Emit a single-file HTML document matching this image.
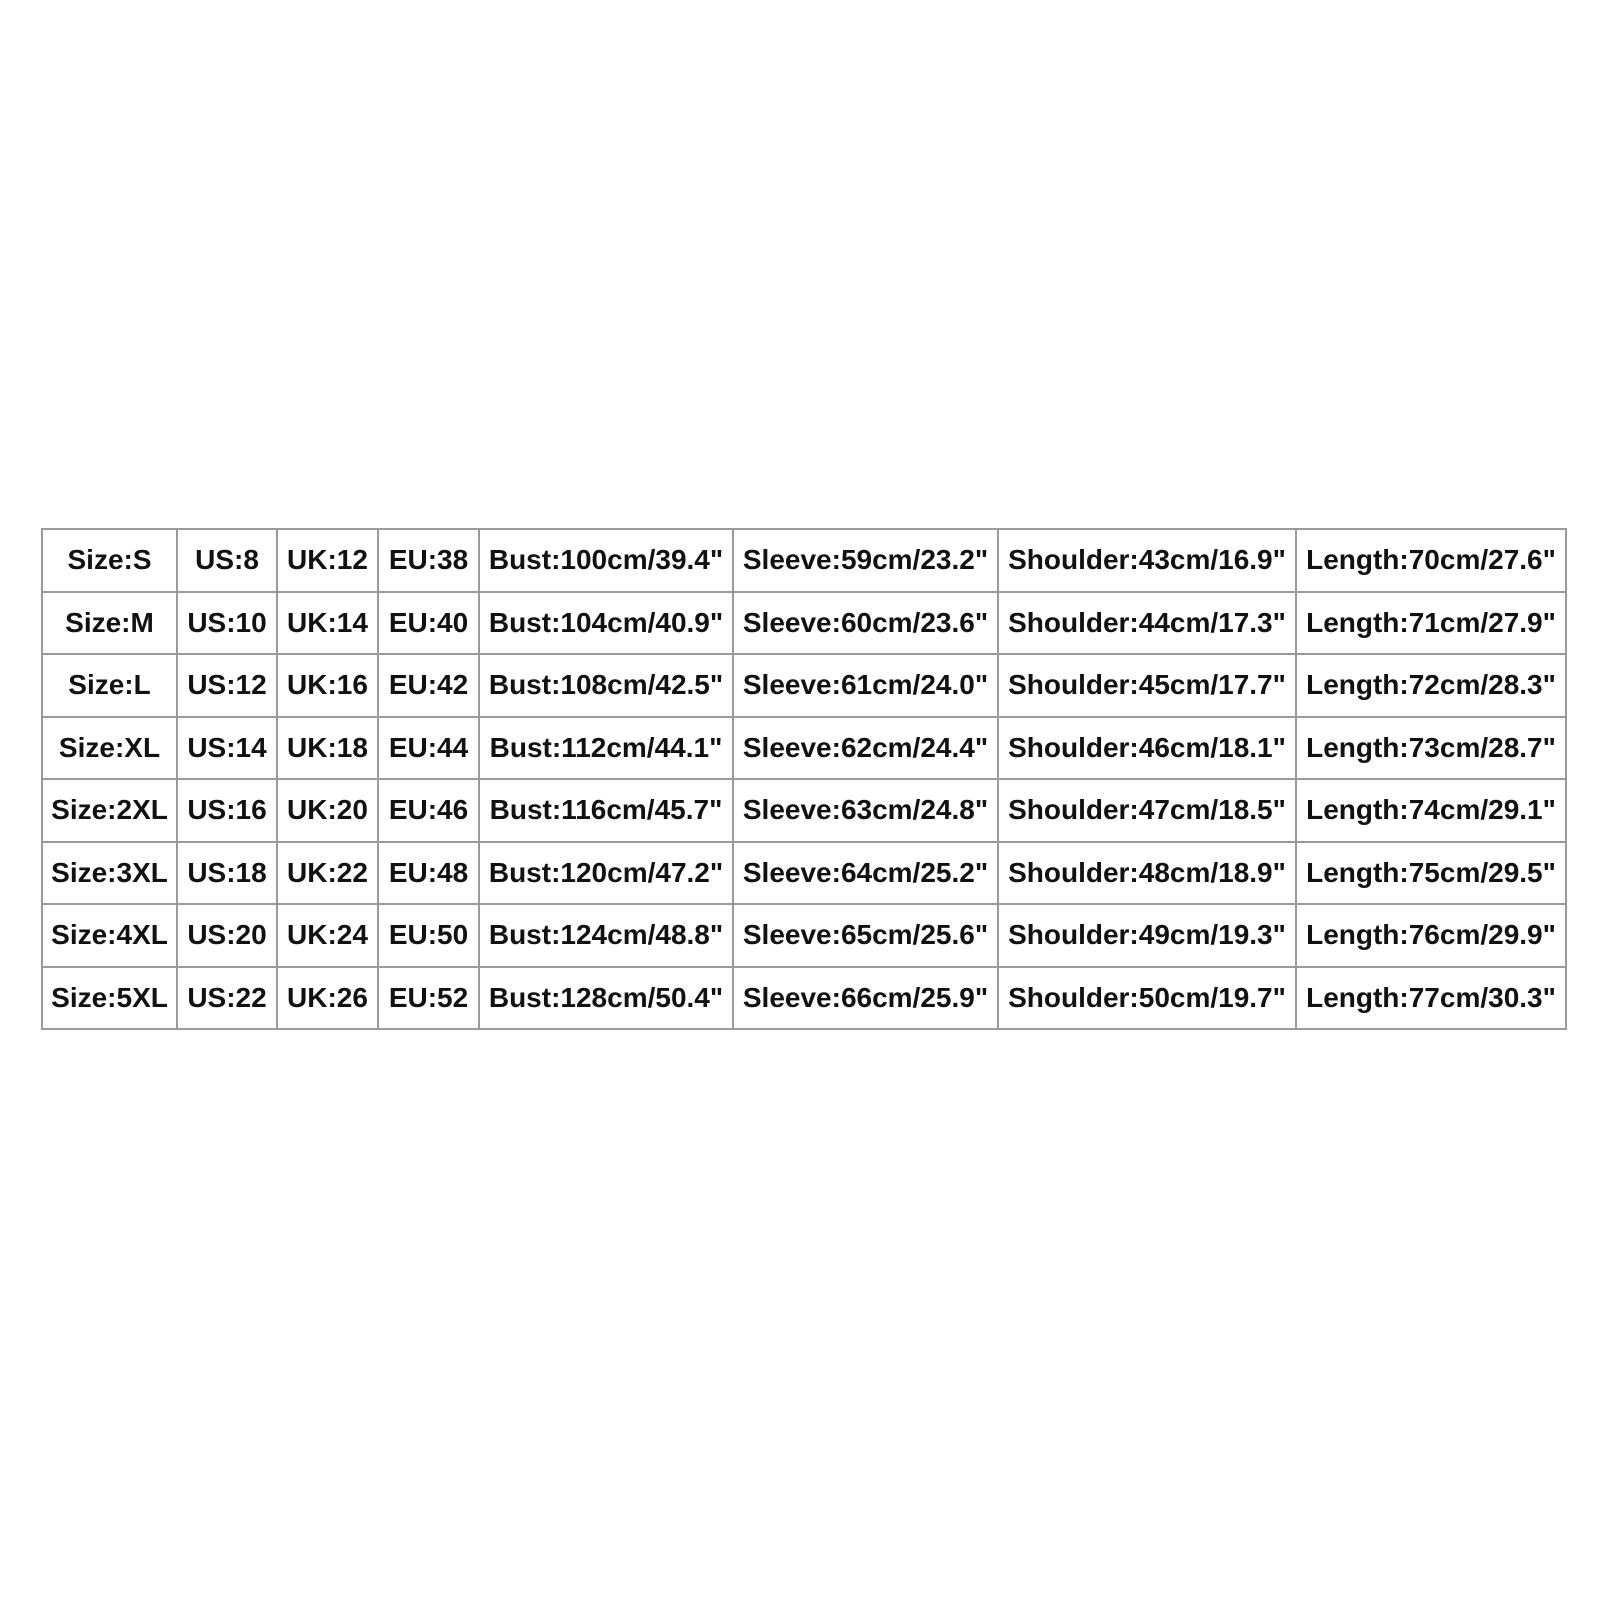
<!DOCTYPE html>
<html><head><style>
html,body{margin:0;padding:0;background:#fff;width:1600px;height:1600px;overflow:hidden}
table{position:absolute;left:41px;top:528px;border-collapse:collapse;font-family:"Liberation Sans",Arial,sans-serif;font-weight:bold;font-size:28px;color:#111;table-layout:fixed}
td{border:2px solid #9a9a9a;height:60.5px;padding:0;text-align:center;white-space:nowrap;overflow:visible}
</style></head><body>
<table>
<colgroup><col style="width:135px"><col style="width:100px"><col style="width:101px"><col style="width:101px"><col style="width:254px"><col style="width:265px"><col style="width:298px"><col style="width:270px"></colgroup>
<tr><td>Size:S</td><td>US:8</td><td>UK:12</td><td>EU:38</td><td>Bust:100cm/39.4"</td><td>Sleeve:59cm/23.2"</td><td>Shoulder:43cm/16.9"</td><td>Length:70cm/27.6"</td></tr>
<tr><td>Size:M</td><td>US:10</td><td>UK:14</td><td>EU:40</td><td>Bust:104cm/40.9"</td><td>Sleeve:60cm/23.6"</td><td>Shoulder:44cm/17.3"</td><td>Length:71cm/27.9"</td></tr>
<tr><td>Size:L</td><td>US:12</td><td>UK:16</td><td>EU:42</td><td>Bust:108cm/42.5"</td><td>Sleeve:61cm/24.0"</td><td>Shoulder:45cm/17.7"</td><td>Length:72cm/28.3"</td></tr>
<tr><td>Size:XL</td><td>US:14</td><td>UK:18</td><td>EU:44</td><td>Bust:112cm/44.1"</td><td>Sleeve:62cm/24.4"</td><td>Shoulder:46cm/18.1"</td><td>Length:73cm/28.7"</td></tr>
<tr><td>Size:2XL</td><td>US:16</td><td>UK:20</td><td>EU:46</td><td>Bust:116cm/45.7"</td><td>Sleeve:63cm/24.8"</td><td>Shoulder:47cm/18.5"</td><td>Length:74cm/29.1"</td></tr>
<tr><td>Size:3XL</td><td>US:18</td><td>UK:22</td><td>EU:48</td><td>Bust:120cm/47.2"</td><td>Sleeve:64cm/25.2"</td><td>Shoulder:48cm/18.9"</td><td>Length:75cm/29.5"</td></tr>
<tr><td>Size:4XL</td><td>US:20</td><td>UK:24</td><td>EU:50</td><td>Bust:124cm/48.8"</td><td>Sleeve:65cm/25.6"</td><td>Shoulder:49cm/19.3"</td><td>Length:76cm/29.9"</td></tr>
<tr><td>Size:5XL</td><td>US:22</td><td>UK:26</td><td>EU:52</td><td>Bust:128cm/50.4"</td><td>Sleeve:66cm/25.9"</td><td>Shoulder:50cm/19.7"</td><td>Length:77cm/30.3"</td></tr>
</table>
</body></html>
